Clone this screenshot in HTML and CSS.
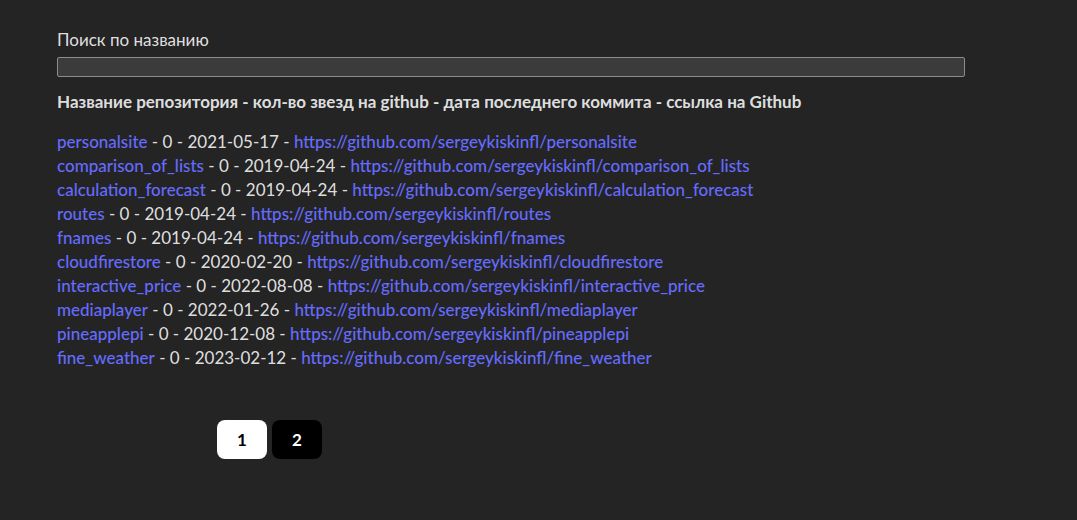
FILE: index.html
```html
<!DOCTYPE html>
<html lang="ru">
<head>
<meta charset="utf-8">
<title>Repos</title>
<link rel="stylesheet" href="styles.css">
</head>
<body>
<div class="page">
  <label class="search-label" for="search">Поиск по названию</label>
  <input class="search" id="search" type="text">
  <h3 class="heading">Название репозитория - кол-во звезд на github - дата последнего коммита - ссылка на Github</h3>
  <ul class="repos">
    <li><a href="#">personalsite</a> - 0 - 2021-05-17 - <a href="#">https://github.com/sergeykiskinfl/personalsite</a></li>
    <li><a href="#">comparison_of_lists</a> - 0 - 2019-04-24 - <a href="#">https://github.com/sergeykiskinfl/comparison_of_lists</a></li>
    <li><a href="#">calculation_forecast</a> - 0 - 2019-04-24 - <a href="#">https://github.com/sergeykiskinfl/calculation_forecast</a></li>
    <li><a href="#">routes</a> - 0 - 2019-04-24 - <a href="#">https://github.com/sergeykiskinfl/routes</a></li>
    <li><a href="#">fnames</a> - 0 - 2019-04-24 - <a href="#">https://github.com/sergeykiskinfl/fnames</a></li>
    <li><a href="#">cloudfirestore</a> - 0 - 2020-02-20 - <a href="#">https://github.com/sergeykiskinfl/cloudfirestore</a></li>
    <li><a href="#">interactive_price</a> - 0 - 2022-08-08 - <a href="#">https://github.com/sergeykiskinfl/interactive_price</a></li>
    <li><a href="#">mediaplayer</a> - 0 - 2022-01-26 - <a href="#">https://github.com/sergeykiskinfl/mediaplayer</a></li>
    <li><a href="#">pineapplepi</a> - 0 - 2020-12-08 - <a href="#">https://github.com/sergeykiskinfl/pineapplepi</a></li>
    <li><a href="#">fine_weather</a> - 0 - 2023-02-12 - <a href="#">https://github.com/sergeykiskinfl/fine_weather</a></li>
  </ul>
  <div class="pager">
    <button class="page-btn active">1</button>
    <button class="page-btn">2</button>
  </div>
</div>
</body>
</html>
```
FILE: styles.css
```css
html, body {
  margin: 0;
  background: #242424;
}
body {
  color: rgba(255, 255, 255, 0.87);
  font-family: Lato, "Noto Sans", sans-serif;
  font-size: 17px;
  line-height: 24px;
}
.page {
  padding: 28px 57px;
}
.search-label {
  display: block;
}
.search {
  display: block;
  box-sizing: border-box;
  margin: 5px 0 0;
  width: 908px;
  height: 20px;
  background: #3b3b3b;
  border: 1px solid #8c8c8c;
  border-radius: 2px;
  padding: 0 4px;
  color: #fff;
}
.heading {
  margin: 13px 0 0;
  font-size: 17px;
  font-weight: 700;
  line-height: 24px;
}
.repos {
  list-style: none;
  margin: 16px 0 0;
  padding: 0;
}
.repos a {
  color: #646cff;
  font-weight: 500;
  text-decoration: none;
}
.pager {
  display: flex;
  gap: 5px;
  margin: 50px 0 0 160px;
}
.page-btn {
  width: 50px;
  height: 39px;
  border: none;
  border-radius: 8px;
  background: #000;
  color: #fff;
  font-family: inherit;
  font-size: 17px;
  font-weight: 700;
  cursor: pointer;
}
.page-btn.active {
  background: #fff;
  color: #000;
}
```
